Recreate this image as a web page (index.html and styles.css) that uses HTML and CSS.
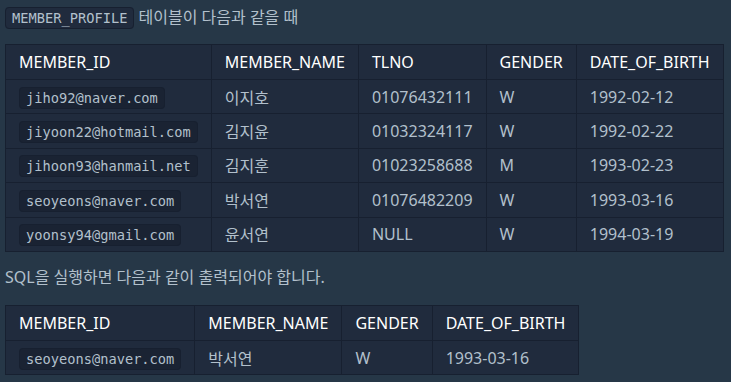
FILE: index.html
```html
<!DOCTYPE html>
<html lang="ko">
<head>
<meta charset="utf-8">
<link rel="stylesheet" href="styles.css">
</head>
<body>
<div class="content">
  <p class="line"><code>MEMBER_PROFILE</code> 테이블이 다음과 같을 때</p>
  <table class="t1">
    <thead>
      <tr><th>MEMBER_ID</th><th>MEMBER_NAME</th><th>TLNO</th><th>GENDER</th><th>DATE_OF_BIRTH</th></tr>
    </thead>
    <tbody>
      <tr><td><code>jiho92@naver.com</code></td><td>이지호</td><td>01076432111</td><td>W</td><td>1992-02-12</td></tr>
      <tr><td><code>jiyoon22@hotmail.com</code></td><td>김지윤</td><td>01032324117</td><td>W</td><td>1992-02-22</td></tr>
      <tr><td><code>jihoon93@hanmail.net</code></td><td>김지훈</td><td>01023258688</td><td>M</td><td>1993-02-23</td></tr>
      <tr><td><code>seoyeons@naver.com</code></td><td>박서연</td><td>01076482209</td><td>W</td><td>1993-03-16</td></tr>
      <tr><td><code>yoonsy94@gmail.com</code></td><td>윤서연</td><td>NULL</td><td>W</td><td>1994-03-19</td></tr>
    </tbody>
  </table>
  <p class="line">SQL을 실행하면 다음과 같이 출력되어야 합니다.</p>
  <table class="t2">
    <thead>
      <tr><th>MEMBER_ID</th><th>MEMBER_NAME</th><th>GENDER</th><th>DATE_OF_BIRTH</th></tr>
    </thead>
    <tbody>
      <tr><td><code>seoyeons@naver.com</code></td><td>박서연</td><td>W</td><td>1993-03-16</td></tr>
    </tbody>
  </table>
</div>
</body>
</html>
```

FILE: styles.css
```css
html, body {
  margin: 0;
  padding: 0;
  background: #263747;
}
body {
  font-family: "Noto Sans", "Noto Sans CJK KR", sans-serif;
  font-size: 16px;
  color: #b2c0cc;
}
.content {
  padding: 4px 5px 0 5px;
}
.line {
  margin: 0;
  line-height: 26px;
}
code {
  font-family: "DejaVu Sans Mono", monospace;
  font-size: 13.7px;
  background: #202b3d;
  border: 1px solid #172030;
  border-radius: 4px;
  padding: 2px 6px;
  color: #b2c0cc;
}
table {
  border-collapse: collapse;
  background: #202b3d;
}
.t1 {
  margin: 13px 0 12px;
}
.t2 {
  margin: 15px 0 0;
}
th, td {
  border: 1px solid #172030;
  text-align: left;
  padding: 0 13px;
  height: 33.4px;
  font-weight: 400;
  white-space: nowrap;
}
th {
  color: #ffffff;
  height: 34px;
}
td code {
  background: #1a2333;
}
```
